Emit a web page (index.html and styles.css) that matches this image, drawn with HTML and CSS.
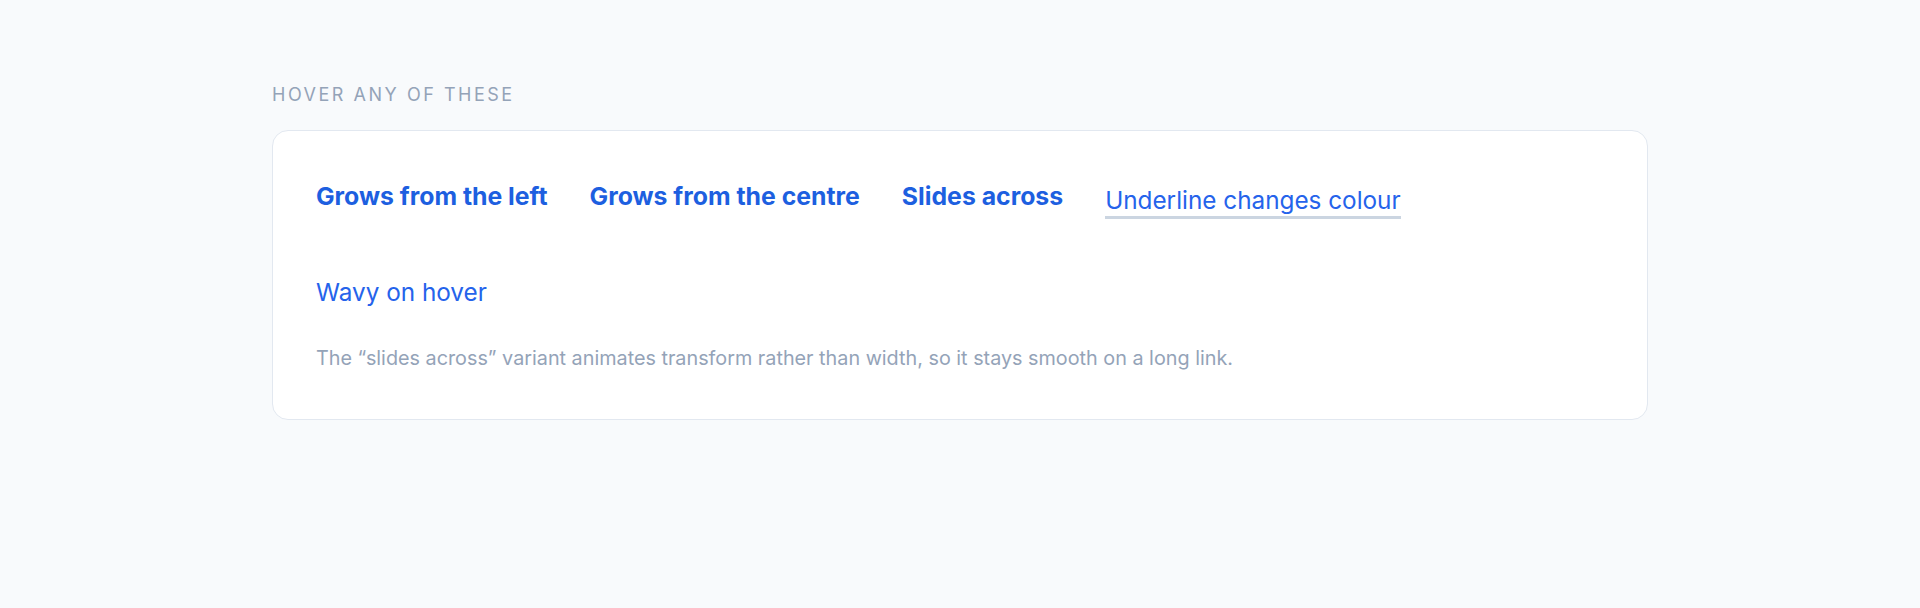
FILE: index.html
```html
<!DOCTYPE html>
<html lang="en">
<head>
    <meta charset="UTF-8">
    <meta name="viewport" content="width=device-width, initial-scale=1.0">
    <title>Link underlines</title>
    <link rel="stylesheet" href="styles.css">
</head>
<body>
    <main class="page">
        <p class="eyebrow">Hover any of these</p>
        <section class="card">
            <nav class="links">
                <a href="#" class="link grow-left">Grows from the left</a>
                <a href="#" class="link grow-centre">Grows from the centre</a>
                <a href="#" class="link slide">Slides across</a>
                <a href="#" class="link recolour">Underline changes colour</a>
                <a href="#" class="link wavy">Wavy on hover</a>
            </nav>
            <p class="note">The “slides across” variant animates transform rather than width, so it stays smooth on a long link.</p>
        </section>
    </main>
</body>
</html>
```

FILE: styles.css
```css
body {
    margin: 0;
    background-color: #f8fafc;
    font-family: Inter, "Noto Sans", Arial, sans-serif;
    color: #0f172a;
}
.page {
    max-width: 1376px;
    margin: 0 auto;
    padding-top: 83px;
}
.eyebrow {
    margin: 0 0 23px;
    font-size: 18px;
    line-height: 24px;
    letter-spacing: 0.14em;
    text-transform: uppercase;
    color: #94a3b8;
}
.card {
    background: #fff;
    border: 1px solid #e2e8f0;
    border-radius: 16px;
    padding: 49px 43px 47px;
}
.links {
    display: flex;
    flex-wrap: wrap;
    align-items: flex-start;
    column-gap: 42px;
    row-gap: 57px;
}
.link {
    position: relative;
    font-size: 24.3px;
    line-height: 32px;
    color: #2563eb;
    text-decoration: none;
}

/* animated underline drawn with a pseudo element */
.grow-left,
.grow-centre,
.slide {
    font-size: 24.8px;
    font-weight: 700;
    color: #1d5fe0;
}
.grow-left::after,
.grow-centre::after {
    content: "";
    position: absolute;
    left: 0;
    bottom: -2px;
    height: 3px;
    width: 0;
    background: currentColor;
    transition: width 0.25s ease, left 0.25s ease;
}
.grow-centre::after {
    left: 50%;
}
.grow-left:hover::after {
    width: 100%;
}
.grow-centre:hover::after {
    left: 0;
    width: 100%;
}
.slide {
    overflow: hidden;
}
.slide::after {
    content: "";
    position: absolute;
    left: 0;
    bottom: 0;
    height: 3px;
    width: 100%;
    background: currentColor;
    transform: translateX(-101%);
    transition: transform 0.3s ease;
}
.slide:hover::after {
    transform: translateX(0);
}
.recolour {
    margin-top: 4px;
    border-bottom: 3px solid #cbd5e1;
    transition: border-color 0.2s;
}
.recolour:hover {
    border-bottom-color: #2563eb;
}
.wavy:hover {
    text-decoration: underline wavy;
    text-underline-offset: 5px;
}
.note {
    margin: 36px 0 0;
    font-size: 19.8px;
    line-height: 28px;
    color: #94a3b8;
}
```
